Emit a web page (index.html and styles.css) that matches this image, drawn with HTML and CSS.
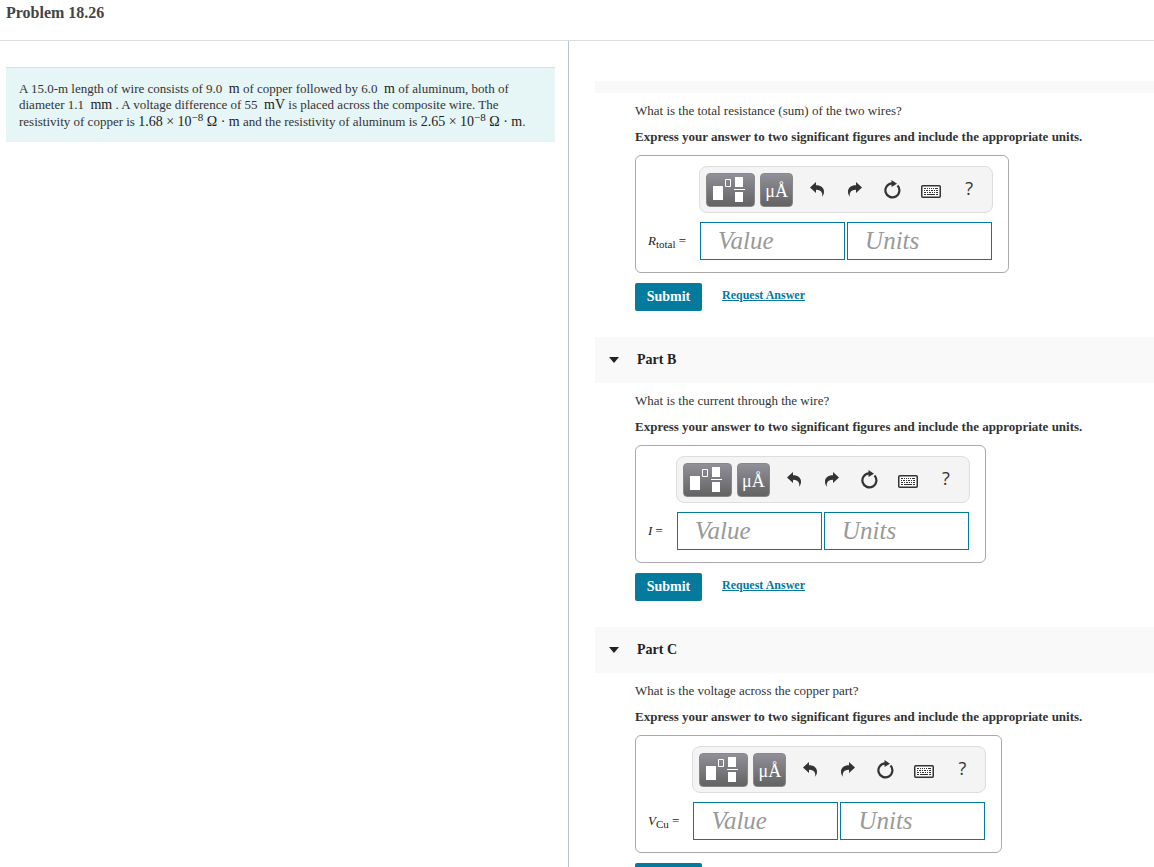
FILE: index.html
```html
<!DOCTYPE html>
<html lang="en">
<head>
<meta charset="utf-8">
<title>Problem 18.26</title>
<link rel="stylesheet" href="styles.css">
</head>
<body>
<svg class="defs" aria-hidden="true">
  <symbol id="i-template" viewBox="0 0 35 26"><path fill="#fff" d="M0 10h10v14H0zM22 1h8v10h-8zM21 13h11v1H21zM22 16h8v10h-8z"/><path fill="none" stroke="#fff" d="M12.500 3.500h5v7h-5z"/></symbol>
  <symbol id="i-undo" viewBox="0 0 14 15"><path d="M0 5.500 6 0v3.200c5 0 8 2.600 8 6.500 0 2-.7 3.800-2.200 5.300.5-1.200.7-2.300.3-3.600C11.500 9 9.500 7.800 6 7.800V11z"/></symbol>
  <symbol id="i-reset" viewBox="0 0 18 19"><path fill="none" stroke="#333" stroke-width="2.200" d="M13.500 5.600a7 7 0 1 1-5.500-2.200"/><path d="M7.500 0 13 3.800 7.500 7z"/></symbol>
  <symbol id="i-keyboard" viewBox="0 0 20 13"><rect x=".75" y=".75" width="18.500" height="11.500" rx="1" fill="#fff" stroke="#333" stroke-width="1.500"/><path d="M3 3h2v1H3zM6 3h1v1H6zM8 3h1v1H8zM10 3h1v1h-1zM12 3h1v1h-1zM14 3h3v1h-3zM3 5h1v1H3zM5 5h2v1H5zM8 5h1v1H8zM10 5h2v1h-2zM13 5h1v1h-1zM15 5h2v1h-2zM3 7h2v1H3zM6 7h1v1H6zM8 7h2v1H8zM11 7h1v1h-1zM13 7h1v1h-1zM15 7h2v1h-2zM3 9h2v1H3zM6 9h8v1H6zM15 9h2v1h-2z"/></symbol>
</svg>
<header class="page-head"><h1>Problem 18.26</h1></header>
<main class="columns">
  <section class="problem">
    <div class="statement">A 15.0-m length of wire consists of 9.0 &nbsp;<span class="math">m</span> of copper followed by 6.0 &nbsp;<span class="math">m</span> of aluminum, both of<br>diameter 1.1 &nbsp;<span class="math">mm</span> . A voltage difference of 55 &nbsp;<span class="math">mV</span> is placed across the composite wire. The<br><span class="tall">resistivity of copper is <span class="math">1.68 × 10<sup>−8</sup> Ω · m</span> and the resistivity of aluminum is <span class="math">2.65 × 10<sup>−8</sup> Ω · m</span>.</span></div>
  </section>
  <section class="parts">
    <article class="part">
      <div class="part-strip"></div>
      <div class="part-body">
        <p>What is the total resistance (sum) of the two wires?</p>
        <p class="strong">Express your answer to two significant figures and include the appropriate units.</p>
        <div class="answer">
          <div class="toolbar" role="toolbar">
            <button class="key wide" aria-label="Templates"><svg class="template"><use href="#i-template"/></svg></button>
            <button class="key">μÅ</button>
            <button class="tool" aria-label="Undo"><svg class="arrow"><use href="#i-undo"/></svg></button>
            <button class="tool" aria-label="Redo"><svg class="arrow flip"><use href="#i-undo"/></svg></button>
            <button class="tool" aria-label="Reset"><svg class="reset"><use href="#i-reset"/></svg></button>
            <button class="tool" aria-label="Keyboard"><svg class="keyboard"><use href="#i-keyboard"/></svg></button>
            <button class="tool help">?</button>
          </div>
          <label for="a-value"><i>R</i><sub>total</sub> =</label>
          <div class="fields"><input id="a-value" placeholder="Value"><input aria-label="Units" placeholder="Units"></div>
        </div>
        <div class="actions"><button class="submit">Submit</button><a href="#">Request Answer</a></div>
      </div>
    </article>
    <article class="part">
      <h2 class="part-head">Part B</h2>
      <div class="part-body">
        <p>What is the current through the wire?</p>
        <p class="strong">Express your answer to two significant figures and include the appropriate units.</p>
        <div class="answer">
          <div class="toolbar" role="toolbar">
            <button class="key wide" aria-label="Templates"><svg class="template"><use href="#i-template"/></svg></button>
            <button class="key">μÅ</button>
            <button class="tool" aria-label="Undo"><svg class="arrow"><use href="#i-undo"/></svg></button>
            <button class="tool" aria-label="Redo"><svg class="arrow flip"><use href="#i-undo"/></svg></button>
            <button class="tool" aria-label="Reset"><svg class="reset"><use href="#i-reset"/></svg></button>
            <button class="tool" aria-label="Keyboard"><svg class="keyboard"><use href="#i-keyboard"/></svg></button>
            <button class="tool help">?</button>
          </div>
          <label for="b-value"><i>I</i> =</label>
          <div class="fields"><input id="b-value" placeholder="Value"><input aria-label="Units" placeholder="Units"></div>
        </div>
        <div class="actions"><button class="submit">Submit</button><a href="#">Request Answer</a></div>
      </div>
    </article>
    <article class="part">
      <h2 class="part-head">Part C</h2>
      <div class="part-body">
        <p>What is the voltage across the copper part?</p>
        <p class="strong">Express your answer to two significant figures and include the appropriate units.</p>
        <div class="answer">
          <div class="toolbar" role="toolbar">
            <button class="key wide" aria-label="Templates"><svg class="template"><use href="#i-template"/></svg></button>
            <button class="key">μÅ</button>
            <button class="tool" aria-label="Undo"><svg class="arrow"><use href="#i-undo"/></svg></button>
            <button class="tool" aria-label="Redo"><svg class="arrow flip"><use href="#i-undo"/></svg></button>
            <button class="tool" aria-label="Reset"><svg class="reset"><use href="#i-reset"/></svg></button>
            <button class="tool" aria-label="Keyboard"><svg class="keyboard"><use href="#i-keyboard"/></svg></button>
            <button class="tool help">?</button>
          </div>
          <label for="c-value"><i>V</i><sub>Cu</sub> =</label>
          <div class="fields"><input id="c-value" placeholder="Value"><input aria-label="Units" placeholder="Units"></div>
        </div>
        <div class="actions"><button class="submit">Submit</button><a href="#">Request Answer</a></div>
      </div>
    </article>
  </section>
</main>
</body>
</html>
```
FILE: styles.css
```css
* { box-sizing: border-box; }
body {
  margin: 0;
  height: 100vh;
  overflow: hidden;
  display: flex;
  flex-direction: column;
  background: #fff;
  color: #333;
  font: 13px/16px "Liberation Serif", "Times New Roman", serif;
}
button, input { font-family: inherit; margin: 0; }
.defs { display: none; }
.page-head { padding: 4px 6px 18px; border-bottom: 1px solid #ddd; }
.page-head h1 { margin: 0; font-size: 16px; line-height: 18px; color: #444; }
.columns { flex: 1; min-height: 0; display: grid; grid-template-columns: 569px 1fr; }
.problem { padding: 26px 13px 0 6px; border-right: 1px solid #b5c7d6; }
.statement {
  padding: 13px 12px 12px 13px;
  border-top: 1px solid #d3e2e4;
  background: #e6f5f6;
  white-space: nowrap;
}
.tall { display: block; line-height: 17px; }
.math { font-size: 14px; line-height: 1; color: #222; }
.math sup { font-size: 11px; line-height: 0; vertical-align: 5px; }
.parts { padding: 40px 0 0 26px; overflow: hidden; }
.part-strip { height: 12px; background: #f9f9f9; }
.part-head {
  display: flex;
  align-items: center;
  gap: 18px;
  margin: 0;
  height: 46px;
  padding-left: 14px;
  background: #f9f9f9;
  color: #222;
  font-size: 14px;
}
.part-head::before {
  content: "";
  border: 5px solid transparent;
  border-top: 6px solid #222;
  border-bottom: 0;
}
.part-body { padding: 10px 0 26px 40px; }
.part-body p { margin: 0 0 10px; }
.part-body .strong { font-weight: bold; }
.answer {
  display: inline-grid;
  grid-template-columns: auto 294px;
  column-gap: 13px;
  row-gap: 9px;
  align-items: center;
  padding: 10px 15px 12px 12px;
  border: 1px solid #aaa;
  border-radius: 6px;
  vertical-align: top;
}
.toolbar {
  grid-column: 2;
  display: flex;
  align-items: center;
  height: 47px;
  padding: 0 0 0 6px;
  border: 1px solid #ddd;
  border-radius: 8px;
  background: #f4f4f4;
}
.key {
  display: flex;
  flex: none;
  align-items: center;
  justify-content: center;
  width: 33px;
  height: 34px;
  margin-right: 5px;
  padding: 3px 0 0;
  border: 1px solid #888;
  border-radius: 4px;
  background: linear-gradient(#918f98, #636363);
  color: #fff;
  font-size: 18px;
}
.wide { width: 49px; padding: 0 0 2px; }
.tool {
  display: flex;
  flex: none;
  align-items: center;
  justify-content: center;
  width: 38px;
  height: 34px;
  padding: 0;
  border: 0;
  background: none;
  fill: #333;
}
.help { padding-bottom: 3px; color: #333; font: 18px "Open Sans", sans-serif; }
.template { width: 35px; height: 26px; }
.arrow { width: 14px; height: 15px; }
.flip { transform: scaleX(-1); }
.reset { width: 18px; height: 19px; }
.keyboard { width: 20px; height: 13px; margin-top: 3px; }
.answer label { color: #222; white-space: nowrap; }
.answer sub { font-size: 11px; line-height: 0; vertical-align: -3px; }
.fields { display: flex; gap: 2px; padding: 0 1px; }
.fields input {
  width: 0;
  flex: 1;
  height: 38px;
  padding: 0 17px;
  border: 1px solid #047a9c;
  border-radius: 0;
  background: #fff;
  font-size: 25px;
}
.fields input::placeholder { color: #999; font-style: italic; opacity: 1; }
.actions { display: flex; gap: 20px; padding-top: 10px; }
.submit {
  width: 67px;
  height: 28px;
  padding: 0;
  border: 0;
  border-radius: 2px;
  background: #047a9c;
  color: #fff;
  font-size: 14px;
  font-weight: bold;
}
.actions a { margin-top: 4px; color: #047a9c; font-size: 12px; font-weight: bold; text-decoration: underline; }
```
